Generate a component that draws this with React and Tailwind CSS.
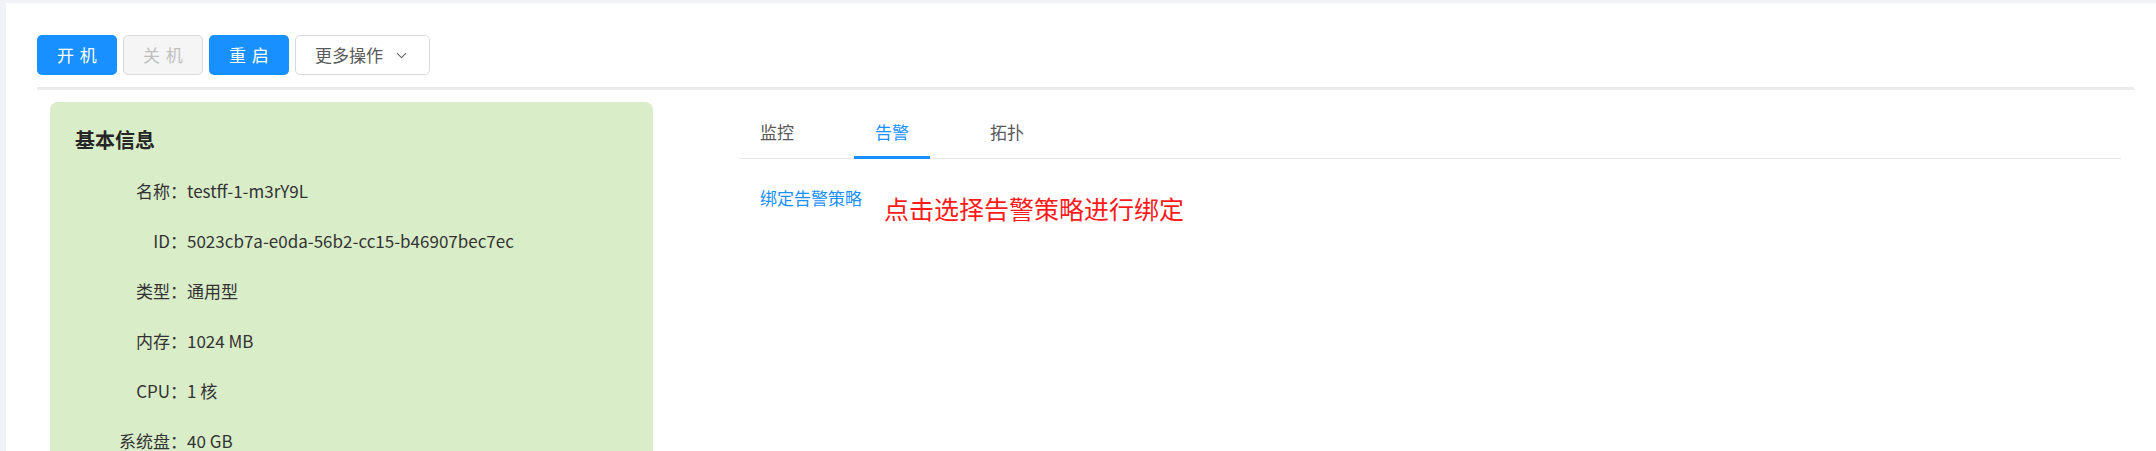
import { ChevronDown } from "lucide-react";

const FONT = { fontFamily: '"Noto Sans CJK SC", "Noto Sans", sans-serif' };

const INFO = [
  { label: "名称", value: "testff-1-m3rY9L" },
  { label: "ID", value: "5023cb7a-e0da-56b2-cc15-b46907bec7ec" },
  { label: "类型", value: "通用型" },
  { label: "内存", value: "1024 MB" },
  { label: "CPU", value: "1 核" },
  { label: "系统盘", value: "40 GB" },
];

const TABS = ["监控", "告警", "拓扑"];

export default function App() {
  return (
    <div className="min-h-screen bg-[#f0f2f5] pt-[3px] pl-[6px]" style={FONT}>
      <div className="bg-white pt-[32px] pl-[31px] pr-[22px] min-h-[448px]">

        {/* ── Action buttons ─────────────────────────────── */}
        <div className="flex items-center gap-[6px]">
          <button className="h-[40px] w-[80px] rounded-[5px] bg-[#1890ff] text-white text-[17px] tracking-[0.34em] pl-[0.34em]">
            开机
          </button>
          <button
            disabled
            className="h-[40px] w-[80px] rounded-[5px] bg-[#f5f5f5] border border-[#d9d9d9] text-[#bfbfbf] text-[17px] tracking-[0.34em] pl-[0.34em]"
          >
            关机
          </button>
          <button className="h-[40px] w-[80px] rounded-[5px] bg-[#1890ff] text-white text-[17px] tracking-[0.34em] pl-[0.34em]">
            重启
          </button>
          <button className="h-[40px] w-[135px] rounded-[5px] bg-white border border-[#d9d9d9] text-[#595959] text-[17px] flex items-center justify-center gap-[10px]">
            <span>更多操作</span>
            <ChevronDown size={17} strokeWidth={1.5} className="text-[#666]" />
          </button>
        </div>

        <div className="mt-[12px] h-[3px] bg-[#ebebeb]" />

        {/* ── Body ───────────────────────────────────────── */}
        <div className="flex items-start mt-[12px] px-[13px]">

          {/* Basic info card */}
          <div className="w-[603px] shrink-0 rounded-[8px] bg-[#d9edc9] pt-[24px] pb-[30px] pl-[25px]">
            <h3 className="text-[20px] font-bold text-[#262626] leading-[28px]">基本信息</h3>
            <div className="mt-[12px] flex flex-col">
              {INFO.map(({ label, value }) => (
                <div key={label} className="flex items-center h-[50px] text-[17px] text-[#333]">
                  <span className="w-[112px] text-right shrink-0">{label}：</span>
                  <span>{value}</span>
                </div>
              ))}
            </div>
          </div>

          {/* Tabs panel */}
          <div className="flex-1 ml-[86px] mt-[3px]">
            <div className="flex gap-[39px] border-b border-[#e8e8e8]">
              {TABS.map((t) => {
                const active = t === "告警";
                return (
                  <div
                    key={t}
                    className={
                      active
                        ? "w-[76px] text-center pt-[14px] pb-[12px] text-[17px] leading-[25px] text-[#1890ff] border-b-[3px] border-[#1890ff] -mb-px"
                        : "w-[76px] text-center pt-[14px] pb-[12px] text-[17px] leading-[25px] text-[#595959] border-b-[3px] border-transparent -mb-px"
                    }
                  >
                    {t}
                  </div>
                );
              })}
            </div>

            <div className="flex items-start pt-[26px] pl-[21px]">
              <a className="text-[17px] leading-[25px] text-[#1890ff] cursor-pointer">绑定告警策略</a>
              <span className="ml-[22px] mt-[6px] text-[25px] leading-[34px] text-[#ff1a1a]">
                点击选择告警策略进行绑定
              </span>
            </div>
          </div>
        </div>
      </div>
    </div>
  );
}
